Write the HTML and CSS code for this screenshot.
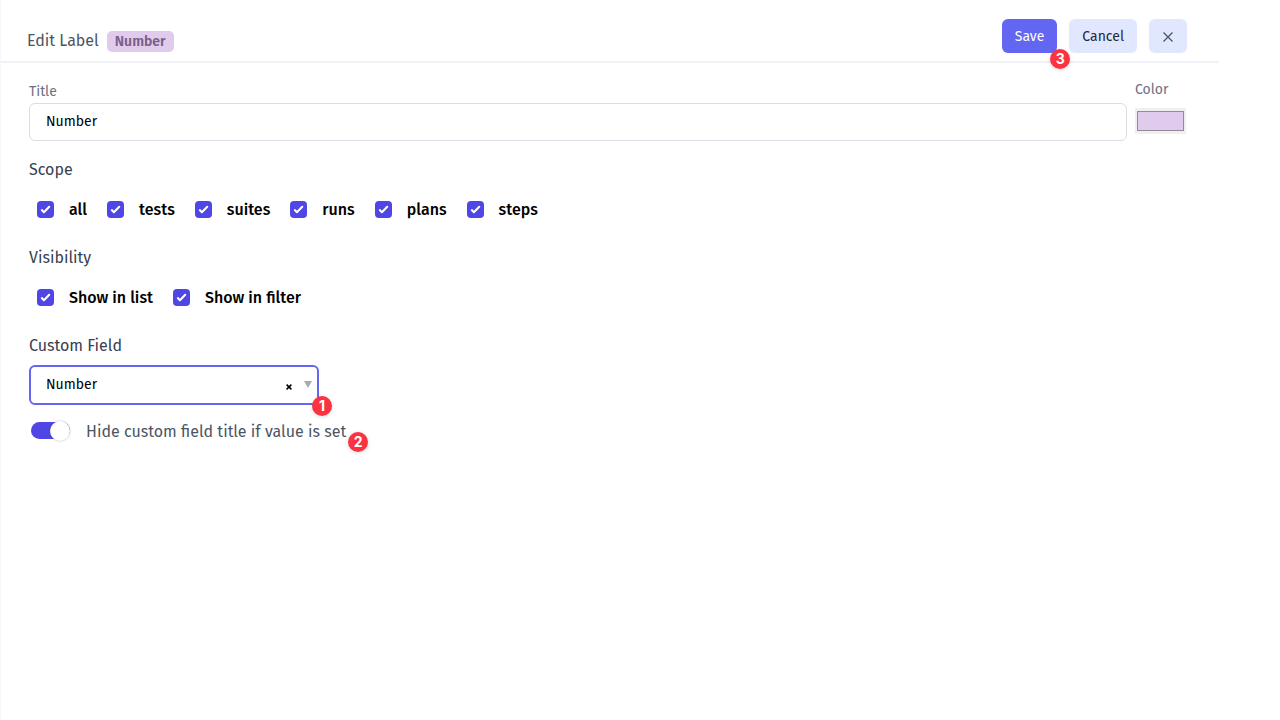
FILE: index.html
```html
<!DOCTYPE html>
<html lang="en">
<head>
<meta charset="utf-8">
<meta name="viewport" content="width=device-width, initial-scale=1">
<title>Edit Label</title>
<link rel="stylesheet" href="styles.css">
</head>
<body>
<form class="panel">
  <header class="header">
    <h1 class="heading">Edit Label <span class="tag">Number</span></h1>
    <div class="actions">
      <div class="anchor">
        <button class="btn btn-primary" type="button">Save</button>
        <span class="marker marker-save">3</span>
      </div>
      <button class="btn" type="button">Cancel</button>
      <button class="btn btn-close" type="button" aria-label="Close">
        <svg width="12" height="12" viewBox="0 0 12 12" fill="none" stroke="#4b5563" stroke-width="1.3"><path d="M1.5 1.5 10.5 10.5M10.5 1.5 1.5 10.5"/></svg>
      </button>
    </div>
  </header>

  <main class="body">
    <div class="row">
      <div class="field field-title">
        <label class="caption" for="title">Title</label>
        <input class="input" id="title" type="text" value="Number">
      </div>
      <div class="field field-color">
        <label class="caption" for="color">Color</label>
        <input class="swatch" id="color" type="color" value="#e0cbec">
      </div>
    </div>

    <fieldset class="group">
      <legend class="legend">Scope</legend>
      <div class="checks">
        <label class="check"><input type="checkbox" checked>all</label>
        <label class="check"><input type="checkbox" checked>tests</label>
        <label class="check"><input type="checkbox" checked>suites</label>
        <label class="check"><input type="checkbox" checked>runs</label>
        <label class="check"><input type="checkbox" checked>plans</label>
        <label class="check"><input type="checkbox" checked>steps</label>
      </div>
    </fieldset>

    <fieldset class="group">
      <legend class="legend">Visibility</legend>
      <div class="checks">
        <label class="check"><input type="checkbox" checked>Show in list</label>
        <label class="check"><input type="checkbox" checked>Show in filter</label>
      </div>
    </fieldset>

    <div class="group">
      <label class="legend" for="custom">Custom Field</label>
      <div class="anchor select-box">
        <select class="select" id="custom"><option>Number</option></select>
        <button class="clear" type="button" aria-label="Clear"><svg width="6" height="6" viewBox="0 0 6 6" fill="none" stroke="#000" stroke-width="1.5"><path d="M.6.6 5.4 5.4M5.4.6.6 5.4"/></svg></button>
        <svg class="arrow" width="8" height="7" viewBox="0 0 8 7" fill="#aaa"><path d="M0 0H8L4 7Z"/></svg>
        <span class="marker marker-select">1</span>
      </div>
      <div class="anchor switch-row">
        <label class="switch"><input type="checkbox" role="switch" checked><span class="switch-text">Hide custom field title if value is set</span></label>
        <span class="marker marker-switch">2</span>
      </div>
    </div>
  </main>
</form>
</body>
</html>
```
FILE: styles.css
```css
* { box-sizing: border-box; }
body {
  margin: 0;
  background: #fff;
  color: #000;
  font-family: "Fira Sans", "Noto Sans", sans-serif;
  font-size: 14px;
  line-height: 20px;
}
button, input, select { font: inherit; margin: 0; }
.panel {
  min-height: 100vh;
  padding-right: 61px;
  border-left: 1px solid #f7f7fd;
}
.header {
  display: flex;
  justify-content: space-between;
  align-items: flex-end;
  padding: 19px 32px 8px 26px;
  border-bottom: 2px solid #f1f2f5;
}
.heading {
  display: flex;
  align-items: center;
  gap: 8px;
  margin: 0;
  font-size: 16px;
  font-weight: 400;
  line-height: 24px;
  color: #4b5563;
}
.tag {
  padding: 0 8px;
  border-radius: 5px;
  background: #e0cbec;
  color: #79608a;
  font-size: 14px;
  font-weight: 600;
  line-height: 21px;
}
.actions { display: flex; gap: 12px; }
.anchor { position: relative; }
.btn {
  display: flex;
  align-items: center;
  justify-content: center;
  height: 34px;
  padding: 1px 13px 0;
  border: 0;
  border-radius: 6px;
  background: #e0e7ff;
  color: #1f2937;
}
.btn-primary { background: #6366f1; color: #fff; }
.btn-close { width: 38px; }
.marker {
  position: absolute;
  width: 20px;
  height: 20px;
  border-radius: 50%;
  background: #fb3340;
  color: #fff;
  font-family: Inter, sans-serif;
  font-size: 14px;
  font-weight: 700;
  text-align: center;
  box-shadow: 0 1px 4px rgba(0, 0, 0, .15);
}
.marker-save { right: -13px; bottom: -16px; }
.marker-select { right: -13px; bottom: -11px; }
.marker-switch { left: 100%; bottom: -8px; margin-left: 2px; }
.body { padding: 17px 32px 0 28px; }
.row { display: flex; gap: 8px; margin-bottom: 17px; }
.field { display: flex; flex-direction: column; }
.field-title { flex: 1; padding-top: 2px; }
.field-color { width: 52px; }
.caption { color: #6b7280; }
.input {
  width: 100%;
  height: 38px;
  margin-top: 1px;
  padding: 0 16px 2px;
  border: 1px solid #dcdce4;
  border-radius: 6px;
  background: #fff;
}
.swatch {
  width: 51px;
  height: 26px;
  margin-top: 8px;
  padding: 1px 0;
  border: 0;
  background: #efefef;
}
.swatch::-webkit-color-swatch-wrapper { padding: 2px; }
.swatch::-webkit-color-swatch { border: 1px solid #948b98; }
.group { margin: 0 0 16px; padding: 0; border: 0; min-width: 0; }
.legend {
  display: block;
  padding: 0;
  font-size: 16px;
  line-height: 24px;
  color: #374151;
}
.checks { display: flex; gap: 20px; padding: 16px 8px 8px; }
.check {
  display: flex;
  align-items: center;
  gap: 15px;
  font-size: 16px;
  font-weight: 500;
  line-height: 24px;
}
.check input {
  appearance: none;
  width: 17px;
  height: 17px;
  margin-bottom: 2px;
  border-radius: 4px;
  background: #4f46e5 url("data:image/svg+xml,%3Csvg viewBox='0 0 16 16' fill='white' xmlns='http://www.w3.org/2000/svg'%3E%3Cpath d='M12.2 4.8a1 1 0 0 1 0 1.4l-5 5a1 1 0 0 1-1.4 0l-2-2a1 1 0 0 1 1.4-1.4L6.5 9.1l4.3-4.3a1 1 0 0 1 1.4 0z'/%3E%3C/svg%3E") center / 100%;
}
.select-box { width: 290px; margin-top: 7px; }
.select {
  display: block;
  appearance: none;
  width: 100%;
  height: 40px;
  padding: 0 15px;
  border: 2px solid #6366f1;
  border-radius: 6px;
  background: #fff;
  color: #000;
}
.clear {
  position: absolute;
  right: 27px;
  top: 19px;
  display: flex;
  padding: 0;
  border: 0;
  background: none;
}
.arrow { position: absolute; right: 7px; top: 16px; }
.switch-row { width: fit-content; margin-top: 13px; padding-left: 2px; }
.switch {
  display: flex;
  align-items: flex-start;
  gap: 16px;
  font-size: 16px;
  line-height: 24px;
  color: #4b5563;
}
.switch-text { padding-top: 2px; }
.switch input {
  appearance: none;
  display: flex;
  align-items: center;
  justify-content: flex-end;
  width: 39px;
  height: 17px;
  margin-top: 4px;
  border-radius: 9px;
  background: #4f46e5;
}
.switch input::before {
  content: "";
  width: 20px;
  height: 20px;
  flex: none;
  border-radius: 50%;
  background: #fff;
  box-shadow: 0 0 2px rgba(0, 0, 0, .3);
}
```
